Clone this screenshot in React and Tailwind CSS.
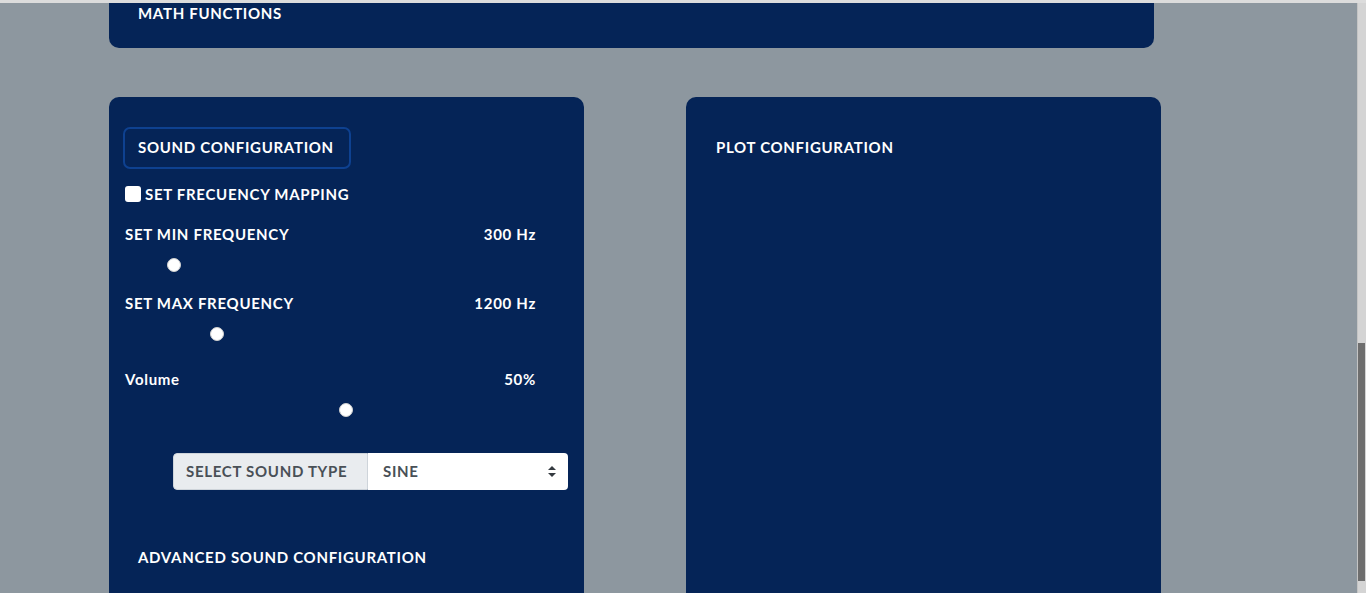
const font = { fontFamily: "Lato, 'Open Sans', sans-serif" };

function Slider({ offset }) {
  // thumb sits on an invisible track, offset in px from the track start
  return (
    <div className="mt-[14px] ml-4 w-[442px] h-[14px] flex">
      <div className={`h-[14px] w-[14px] rounded-full bg-white border border-[#d0d0d0] ${offset}`} />
    </div>
  );
}

function LabelRow({ label, value, className }) {
  return (
    <div
      className={`flex justify-between items-center h-5 pl-4 pr-12 text-[15px] font-bold text-white ${className}`}
    >
      <span>{label}</span>
      <span>{value}</span>
    </div>
  );
}

export default function App() {
  return (
    <div
      className="h-[593px] w-full flex flex-col overflow-hidden tracking-[0.7px]"
      style={font}
    >
      <div className="h-[3px] bg-[#dcdcdc] shrink-0" />
      <div className="flex flex-1 min-h-0">
        <div className="flex-1 bg-[#8d979f] flex flex-col">
          <div className="ml-[109px] w-[1045px] h-[45px] bg-[#052457] rounded-b-[10px] pl-[29px]">
            <div className="h-5 text-[15px] font-bold text-white leading-5">
              MATH FUNCTIONS
            </div>
          </div>

          <div className="flex mt-[49px] flex-1">
            <div className="ml-[109px] w-[475px] bg-[#052457] rounded-t-[10px] flex flex-col">
              <div className="mt-[30px] ml-[14px] w-[228px] h-[42px] border-2 border-[#0e4190] rounded-[7px] flex items-center pl-[13px] pb-[2px] text-[15px] font-bold text-white">
                SOUND CONFIGURATION
              </div>

              <div className="mt-[15px] ml-4 h-5 flex items-center gap-1 text-[15px] font-bold text-white">
                <div className="w-4 h-4 bg-white rounded-[3px]" />
                <span>SET FRECUENCY MAPPING</span>
              </div>

              <LabelRow label="SET MIN FREQUENCY" value="300 Hz" className="mt-[20px]" />
              <Slider offset="ml-[42px]" />

              <LabelRow label="SET MAX FREQUENCY" value="1200 Hz" className="mt-[21px]" />
              <Slider offset="ml-[85px]" />

              <LabelRow label="Volume" value="50%" className="mt-[28px]" />
              <Slider offset="ml-[214px]" />

              <div className="mt-9 ml-16 w-[395px] h-[37px] flex rounded-[4px] overflow-hidden text-[15px] font-bold">
                <div className="w-[195px] bg-[#e9ecef] border border-[#ced4da] rounded-l-[4px] flex items-center pl-3 text-[#495057]">
                  SELECT SOUND TYPE
                </div>
                <div className="flex-1 bg-white flex items-center justify-between pl-[15px] pr-[12px] text-[#495057]">
                  <span>SINE</span>
                  <svg width="8" height="11" viewBox="0 0 8 11">
                    <path d="M4 0 L8 4 L0 4 Z" fill="#343a40" />
                    <path d="M0 7 L8 7 L4 11 Z" fill="#343a40" />
                  </svg>
                </div>
              </div>

              <div className="mt-[57px] ml-[29px] h-5 flex items-center text-[15px] font-bold text-white">
                ADVANCED SOUND CONFIGURATION
              </div>
            </div>

            <div className="ml-[102px] w-[475px] bg-[#052457] rounded-t-[10px] flex flex-col">
              <div className="mt-10 ml-[30px] h-5 flex items-center text-[15px] font-bold text-white">
                PLOT CONFIGURATION
              </div>
            </div>
          </div>
        </div>

        <div className="w-[9px] bg-[#d4d4d4] border-l border-[#c4c4c4] flex flex-col">
          <div className="mt-[340px] h-[238px] w-[7px] bg-[#6e6e6e]" />
        </div>
      </div>
    </div>
  );
}
